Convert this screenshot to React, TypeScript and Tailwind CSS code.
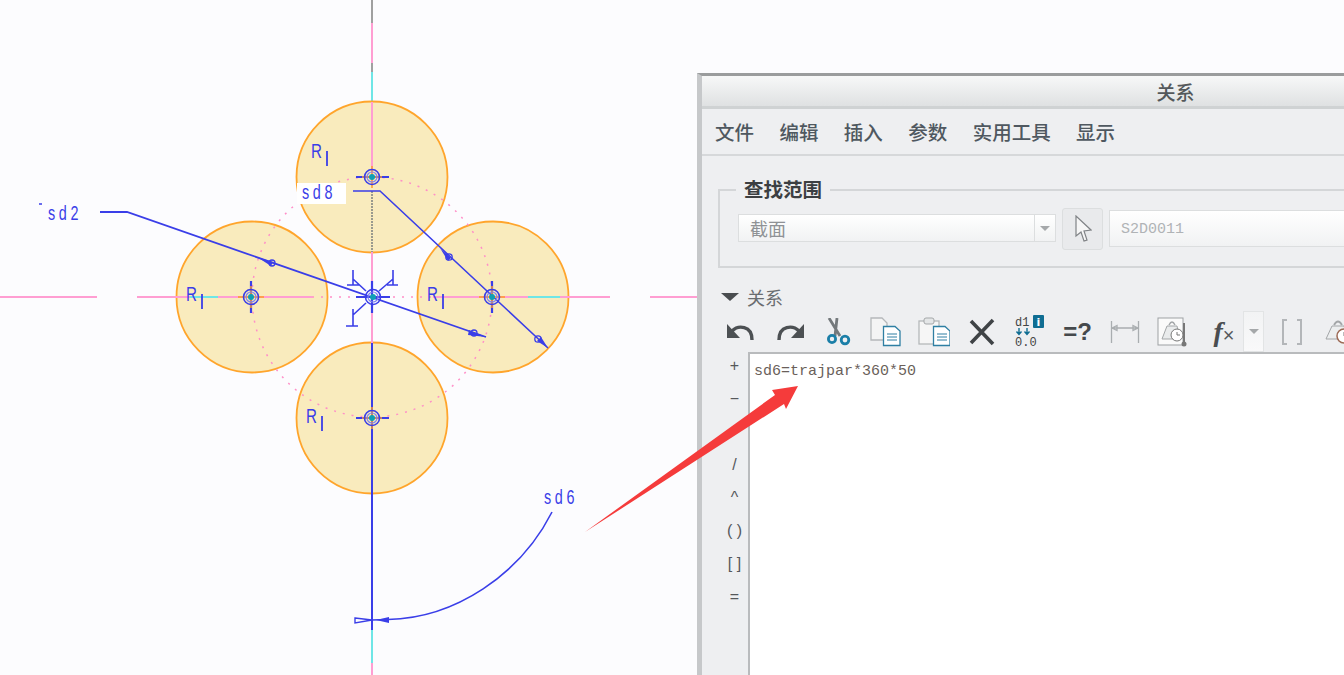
const BLUE = "#3a3ee8";
const PINK = "#ff9ed2";
const CYAN = "#6fe6e6";
const DOTS = "#ff8fc8";

const CJK = "font-['Noto_Sans_CJK_SC',sans-serif]";

function Rings({ x, y }: { x: number; y: number }) {
  return (
    <g>
      <circle cx={x} cy={y} r="7.5" fill="none" stroke={BLUE} strokeWidth="1.6" />
      <circle cx={x} cy={y} r="5" fill="none" stroke="#7f83f0" strokeWidth="1.2" />
      <circle cx={x} cy={y} r="3" fill="#0f9fb5" />
    </g>
  );
}

function CenterMark({ x, y }: { x: number; y: number }) {
  return (
    <g>
      <line x1={x - 16} x2={x + 17} y1={y} y2={y} stroke={BLUE} strokeWidth="2.2" />
      <line x1={x - 10} x2={x + 10} y1={y} y2={y} stroke="#ff9d2e" strokeWidth="1.5" />
      <line x1={x} x2={x} y1={y - 11} y2={y + 11} stroke="#ff9d2e" strokeWidth="1.5" />
      <Rings x={x} y={y} />
    </g>
  );
}

function SideMark({ x, y }: { x: number; y: number }) {
  return (
    <g>
      <line x1={x} x2={x} y1={y - 16} y2={y + 16} stroke={BLUE} strokeWidth="2.2" />
      <line x1={x - 13} x2={x + 13} y1={y} y2={y} stroke="#ff9d2e" strokeWidth="1.6" />
      <line x1={x} x2={x} y1={y - 11} y2={y + 11} stroke="#ff9d2e" strokeWidth="1.5" />
      <Rings x={x} y={y} />
    </g>
  );
}

function Label({ x, y, children }: { x: number; y: number; children: string }) {
  return (
    <text
      transform={`translate(${x} ${y}) scale(0.72 1)`}
      fill={BLUE}
      fontFamily="'Liberation Sans', sans-serif"
      fontSize="20"
      letterSpacing="5"
    >
      {children}
    </text>
  );
}

function Radius({ x, y }: { x: number; y: number }) {
  return (
    <g>
      <text
        transform={`translate(${x} ${y}) scale(0.72 1)`}
        fill={BLUE}
        fontFamily="'Liberation Sans', sans-serif"
        fontSize="21"
      >
        R
      </text>
      <line x1={x + 16} x2={x + 16} y1={y - 7} y2={y + 8} stroke={BLUE} strokeWidth="1.8" />
    </g>
  );
}

function Sketch() {
  return (
    <svg className="absolute left-0 top-0" width="697" height="675" viewBox="0 0 697 675">
      {/* centre lines */}
      <line x1="372" x2="372" y1="0" y2="23" stroke="#a0a0a0" strokeWidth="2" />
      <line x1="372" x2="372" y1="23" y2="63" stroke={PINK} strokeWidth="2" />
      <line x1="372" x2="372" y1="63" y2="72" stroke="#a0a0a0" strokeWidth="2" />
      <line x1="372" x2="372" y1="72" y2="102" stroke={CYAN} strokeWidth="2" />

      {[
        [372, 177],
        [252, 297],
        [493, 297],
        [372, 418],
      ].map(([cx, cy]) => (
        <circle key={`${cx}-${cy}`} cx={cx} cy={cy} r="75.5" fill="#f9ebbd" stroke="#ffa52c" strokeWidth="1.8" />
      ))}

      <circle cx="372" cy="297" r="120" fill="none" stroke={DOTS} strokeWidth="1.5" strokeDasharray="2 7" />

      <line x1="372" x2="372" y1="102" y2="185" stroke={PINK} strokeWidth="2" />
      <line x1="372" x2="372" y1="191" y2="252" stroke="#9a9a8e" strokeWidth="2" strokeDasharray="2 1" />
      <line x1="372" x2="372" y1="252" y2="343" stroke={PINK} strokeWidth="2" />
      <line x1="0" x2="97" y1="297" y2="297" stroke={PINK} strokeWidth="2" />
      <line x1="137" x2="190" y1="297" y2="297" stroke={PINK} strokeWidth="2" />
      <line x1="190" x2="218" y1="297" y2="297" stroke={CYAN} strokeWidth="2" />
      <line x1="218" x2="312" y1="297" y2="297" stroke={PINK} strokeWidth="2" />
      <line x1="312" x2="433" y1="297" y2="297" stroke={DOTS} strokeWidth="1.5" strokeDasharray="2 7" />
      <line x1="433" x2="528" y1="297" y2="297" stroke={PINK} strokeWidth="2" />
      <line x1="528" x2="560" y1="297" y2="297" stroke={CYAN} strokeWidth="2" />
      <line x1="560" x2="610" y1="297" y2="297" stroke={PINK} strokeWidth="2" />
      <line x1="650" x2="697" y1="297" y2="297" stroke={PINK} strokeWidth="2" />
      <line x1="372" x2="372" y1="343" y2="630" stroke={BLUE} strokeWidth="2" />
      <line x1="372" x2="372" y1="630" y2="663" stroke={CYAN} strokeWidth="2" />
      <line x1="372" x2="372" y1="663" y2="675" stroke={PINK} strokeWidth="2" />

      {/* sd8 tag */}
      <rect x="297" y="183" width="49" height="21" fill="#ffffff" />
      <Label x={302} y={199}>sd8</Label>
      <line x1="39" x2="42" y1="204" y2="204" stroke={BLUE} strokeWidth="1.5" />
      <Label x={48} y={220}>sd2</Label>
      <Label x={544} y={504}>sd6</Label>

      {/* sd2 leader */}
      <polyline points="100,212 127,212 486,337" fill="none" stroke={BLUE} strokeWidth="1.8" />
      <polygon points="257,257 273,262 271,266" fill={BLUE} />
      <circle cx="272" cy="263" r="3" fill="none" stroke={BLUE} strokeWidth="1.3" />
      <polygon points="486,337 469,330 468,335" fill={BLUE} />
      <circle cx="474" cy="333" r="3" fill="none" stroke={BLUE} strokeWidth="1.3" />

      {/* sd8 leader */}
      <polyline points="353,191 380,191 548,348" fill="none" stroke={BLUE} strokeWidth="1.5" />
      <polygon points="440,248 451,258 448,261" fill={BLUE} />
      <circle cx="449" cy="257" r="3.2" fill="none" stroke={BLUE} strokeWidth="1.3" />
      <polygon points="548,348 537,341 541,337" fill={BLUE} />
      <circle cx="538" cy="339" r="3.2" fill="none" stroke={BLUE} strokeWidth="1.3" />

      {/* sd6 arc */}
      <path d="M552 512 C 520 575 455 618 388 619.5 L 372 620" fill="none" stroke={BLUE} strokeWidth="1.6" />
      <polygon points="355,618 372,620 355,623" fill="none" stroke={BLUE} strokeWidth="1.4" />
      <polygon points="389,617 376,620 389,623" fill={BLUE} />

      <Radius x={311} y={158} />
      <Radius x={186} y={301} />
      <Radius x={427} y={301} />
      <Radius x={306} y={423} />

      <CenterMark x={372} y={177} />
      <CenterMark x={372} y={418} />
      <SideMark x={251} y={297} />
      <SideMark x={492} y={297} />

      {/* origin with its three locks */}
      <line x1="372" x2="372" y1="281" y2="313" stroke={BLUE} strokeWidth="2.2" />
      <line x1="356" x2="390" y1="297" y2="297" stroke={BLUE} strokeWidth="2" />
      <path d="M366 291 L353 279 M353 270 V285 M347 285 H359" fill="none" stroke={BLUE} strokeWidth="1.6" />
      <path d="M379 291 L393 279 M393 270 V285 M387 285 H398" fill="none" stroke={BLUE} strokeWidth="1.6" />
      <path d="M366 303 L353 315 M353 309 V326 M346 326 H358" fill="none" stroke={BLUE} strokeWidth="1.6" />
      <Rings x={373} y={297} />
    </svg>
  );
}

function Undo({ flip }: { flip?: boolean }) {
  return (
    <svg width="28" height="22" viewBox="0 0 28 22" style={flip ? { transform: "scaleX(-1)" } : undefined}>
      <path d="M5 10 C 11 4 25 4 25 19" fill="none" stroke="#4c5053" strokeWidth="3.4" />
      <polygon points="0,3 0,17 13,17" fill="#4c5053" />
    </svg>
  );
}

function Scissors() {
  return (
    <svg width="26" height="28" viewBox="0 0 26 28">
      <path d="M3 0 L14 18 M11 0 L9 18" stroke="#74797c" strokeWidth="2.8" fill="none" />
      <circle cx="6" cy="21" r="3.6" fill="none" stroke="#1b7fa8" strokeWidth="2.8" />
      <circle cx="19" cy="22" r="3.8" fill="none" stroke="#1b7fa8" strokeWidth="2.8" />
    </svg>
  );
}

function MiniDoc({ x, y }: { x: number; y: number }) {
  return (
    <g transform={`translate(${x} ${y})`}>
      <path d="M.5 .5 H12 L17 5 V19.5 H.5 Z" fill="#ffffff" stroke="#2f7fa3" strokeWidth="1.3" />
      <path d="M4 8 H14 M4 11 H14 M4 14 H14" stroke="#2f7fa3" />
    </g>
  );
}

function CopyIcon() {
  return (
    <svg width="32" height="30" viewBox="0 0 32 30">
      <path d="M1 1 H12 L17 6 V23 H1 Z" fill="#f4f4f4" stroke="#b5b8ba" strokeWidth="1.3" />
      <MiniDoc x={13} y={9} />
    </svg>
  );
}

function PasteIcon() {
  return (
    <svg width="32" height="30" viewBox="0 0 32 30">
      <rect x="1" y="4" width="20" height="23" fill="#f6f6f6" stroke="#b5b8ba" strokeWidth="1.3" />
      <rect x="6" y="1" width="10" height="6" rx="2" fill="#e4e6e7" stroke="#a4a7a9" />
      <MiniDoc x={15} y={9} />
    </svg>
  );
}

function DeleteIcon() {
  return (
    <svg width="28" height="28" viewBox="0 0 28 28">
      <path d="M3 3 L25 26 M25 2 L3 25" stroke="#3f4346" strokeWidth="3.6" fill="none" />
    </svg>
  );
}

function SwitchDims() {
  return (
    <svg width="34" height="34" viewBox="0 0 34 34">
      <text x="2" y="11" fontSize="12" fill="#444" fontFamily="'Liberation Mono', monospace">d1</text>
      <rect x="20" y="0" width="11" height="13" rx="1" fill="#0f6d92" />
      <text x="25.5" y="11" fontSize="11" fontWeight="700" textAnchor="middle" fill="#fff" fontFamily="'DejaVu Sans', sans-serif">i</text>
      <path d="M6 13 V19 M3.5 16.5 L6 19.5 L8.5 16.5 M14 13 V19 M11.5 16.5 L14 19.5 L16.5 16.5" stroke="#0f6d92" strokeWidth="1.4" fill="none" />
      <text x="2" y="31" fontSize="12" fill="#444" fontFamily="'Liberation Mono', monospace">0.0</text>
    </svg>
  );
}

function DimIcon() {
  return (
    <svg width="30" height="24" viewBox="0 0 30 24">
      <path d="M1.5 1 V23 M28.5 1 V23 M2 8 H28 M2 8 L7 5.5 V10.5 Z M28 8 L23 5.5 V10.5 Z" stroke="#a9adb0" strokeWidth="1.3" fill="none" />
    </svg>
  );
}

function WeightIcon() {
  return (
    <svg width="32" height="30" viewBox="0 0 32 30">
      <rect x="1" y="1" width="25" height="27" fill="#fafafa" stroke="#9da1a4" />
      <path d="M5 22 L10 9 H20 L23 22 Z" fill="#e9ebec" stroke="#a3a6a8" />
      <path d="M12 8 Q15 2 18 8" fill="none" stroke="#a3a6a8" strokeWidth="1.5" />
      <circle cx="20" cy="18" r="6" fill="#ffffff" stroke="#777" />
      <path d="M20 15 V18 H23" stroke="#777" fill="none" />
      <path d="M27 6 V27" stroke="#777" strokeWidth="2" />
      <circle cx="27" cy="27" r="2.5" fill="#777" />
    </svg>
  );
}

function WeightClock() {
  return (
    <svg width="32" height="30" viewBox="0 0 32 30">
      <path d="M2 22 L8 9 H20 L24 22 Z" fill="#eceeef" stroke="#a3a6a8" />
      <path d="M10 8 Q14 1 18 8" fill="none" stroke="#a3a6a8" strokeWidth="1.8" />
      <circle cx="20" cy="19" r="7" fill="#ffffff" stroke="#9c6a55" strokeWidth="1.5" />
      <path d="M20 15 V19 H24" stroke="#777" fill="none" />
    </svg>
  );
}

function Brackets() {
  return (
    <svg width="22" height="26" viewBox="0 0 22 26">
      <path d="M6 1 H2 V25 H6 M16 1 H20 V25 H16" fill="none" stroke="#b3b6b9" strokeWidth="2" />
    </svg>
  );
}

function ToolSlot({ children, w = "w-[48px]" }: { children: React.ReactNode; w?: string }) {
  return <div className={`flex h-full shrink-0 items-center justify-center ${w}`}>{children}</div>;
}

const railKeys = ["+", "−", "*", "/", "^", "( )", "[ ]", "="];

function RelationDialog() {
  return (
    <section className={`absolute left-[697px] top-[73px] flex h-[602px] w-[647px] flex-col border-l-[5px] border-t-[3px] border-l-[#c6c8ca] border-t-[#9a9c9d] bg-[#eeeff1] ${CJK}`}>
      <header className="flex h-[33px] shrink-0 items-center justify-center border-b-[3px] border-[#cfd2d3] bg-gradient-to-b from-[#f7f8f8] to-[#dfe1e2] pl-[305px]">
        <span className="text-[19px] font-medium leading-none text-[#54585b]">关系</span>
      </header>

      <nav className="flex h-[47px] shrink-0 items-center gap-[25.4px] border-b-2 border-[#d6d8da] pl-[13px] text-[19.5px] font-medium leading-none text-[#4f5860]">
        <span>文件</span>
        <span>编辑</span>
        <span>插入</span>
        <span>参数</span>
        <span>实用工具</span>
        <span>显示</span>
      </nav>

      {/* 查找范围 group */}
      <div className="relative ml-[16px] mt-[33px] h-[79px] shrink-0 border-y-2 border-l-2 border-[#d4d6d8]">
        <span className="absolute left-[16px] top-[-14px] bg-[#eeeff1] px-[8px] text-[19.5px] font-bold leading-[24px] text-[#3c3f42]">查找范围</span>
        <div className="ml-[18px] mt-[17px] flex items-start">
          <div className="mt-[6px] flex h-[28px] w-[318px] items-center border border-[#dcdedf] bg-gradient-to-b from-white to-[#f1f2f3]">
            <span className="flex-1 pb-[1px] pl-[11px] text-[18px] leading-none text-[#8f9295]">截面</span>
            <span className="flex h-full w-[21px] items-center justify-center border-l border-[#dcdedf]">
              <span className="h-0 w-0 border-x-[5px] border-t-[5px] border-x-transparent border-t-[#a5a8aa]" />
            </span>
          </div>
          <button className="ml-[6px] flex h-[42px] w-[41px] items-center justify-center rounded-[3px] border border-[#dcdedf] bg-[#e9eaec]">
            <svg width="18" height="28" viewBox="0 0 18 28">
              <path d="M2 1 V21 L7 17 L10 26 L13 25 L10 16 L17 15 Z" fill="#f6f6f6" stroke="#808386" strokeWidth="1.2" />
            </svg>
          </button>
          <div className="ml-[6px] mt-[2px] flex h-[37px] flex-1 items-center border border-r-0 border-[#dcdedf] bg-gradient-to-b from-white to-[#f1f2f3] pl-[11px] pt-[3px] font-['Liberation_Mono',monospace] text-[15px] text-[#b0b3b6]">
            S2D0011
          </div>
        </div>
      </div>

      <div className="ml-[19px] mt-[19px] flex h-[20px] shrink-0 items-center gap-[8px]">
        <span className="h-0 w-0 border-x-[9px] border-t-[8px] border-x-transparent border-t-[#4a4d50]" />
        <span className="text-[18px] leading-none text-[#6a6d70]">关系</span>
      </div>

      <div className="ml-[15px] mt-[4px] flex h-[41px] shrink-0 items-center">
        <ToolSlot><Undo /></ToolSlot>
        <ToolSlot w="w-[50px]"><Undo flip /></ToolSlot>
        <ToolSlot w="w-[47px]"><Scissors /></ToolSlot>
        <ToolSlot><CopyIcon /></ToolSlot>
        <ToolSlot><PasteIcon /></ToolSlot>
        <ToolSlot w="w-[47px]"><DeleteIcon /></ToolSlot>
        <ToolSlot w="w-[49px]"><SwitchDims /></ToolSlot>
        <ToolSlot w="w-[47px]">
          <span className="font-['Liberation_Sans',sans-serif] text-[24px] font-bold leading-none text-[#45494c]">=?</span>
        </ToolSlot>
        <ToolSlot><DimIcon /></ToolSlot>
        <ToolSlot><WeightIcon /></ToolSlot>
        <ToolSlot w="w-[46px]">
          <span className="pl-[8px] font-['Liberation_Serif',serif] text-[28px] font-bold italic leading-none text-[#4a4d50]">f</span>
          <span className="pt-[6px] font-['Liberation_Sans',sans-serif] text-[20px] leading-none text-[#55585b]">×</span>
        </ToolSlot>
        <div className="flex h-full w-[21px] shrink-0 items-center justify-center border border-[#e2e4e5] bg-gradient-to-b from-[#f2f3f4] to-[#f9f9fa]">
          <span className="h-0 w-0 border-x-[5px] border-t-[5px] border-x-transparent border-t-[#a5a8aa]" />
        </div>
        <ToolSlot w="w-[55px]"><Brackets /></ToolSlot>
        <ToolSlot w="w-[42px]"><WeightClock /></ToolSlot>
      </div>

      <div className="flex min-h-0 flex-1">
        <div className="-mt-[3px] flex w-[46px] shrink-0 flex-col items-center pl-[19px] font-['Liberation_Sans',sans-serif] text-[16px] leading-none text-[#55585b]">
          {railKeys.map((key) => (
            <span key={key} className="flex h-[33px] items-center justify-center whitespace-pre">
              {key}
            </span>
          ))}
        </div>
        <div className="flex-1 border-l-2 border-t-2 border-l-[#b9bbbd] border-t-[#b9bbbd] bg-white pl-[4px] pt-[9px] font-['Liberation_Mono',monospace] text-[15px] leading-[17px] text-[#6a5f5a]">
          sd6=trajpar*360*50
        </div>
      </div>
    </section>
  );
}

export default function App() {
  return (
    <div className="relative h-[675px] w-[1344px] overflow-hidden bg-[#fcfcfe]">
      <Sketch />
      <RelationDialog />
      {/* annotation arrow */}
      <svg className="absolute left-0 top-0" width="1344" height="675" viewBox="0 0 1344 675">
        <polygon points="585,532 775,395 772,390 798,386 786,409 784,404" fill="#f53b3b" />
      </svg>
    </div>
  );
}
